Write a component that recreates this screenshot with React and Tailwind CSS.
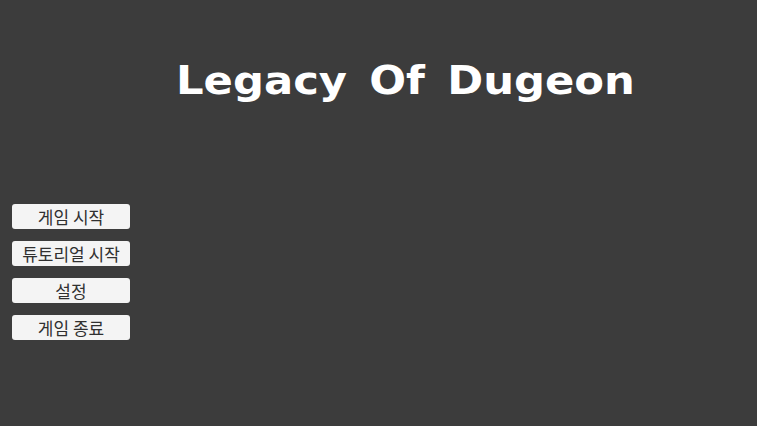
import React from 'react';

const menu = ['게임 시작', '튜토리얼 시작', '설정', '게임 종료'];

export default function App() {
  return (
    <div className="w-[757px] h-[426px] bg-[#3c3c3c] overflow-hidden flex flex-col">
      {/* Title (slightly stretched like the original canvas) */}
      <h1
        className="mt-[58px] ml-[176px] text-[39px] leading-[45px] font-bold [word-spacing:6.5px] text-white whitespace-nowrap origin-left scale-x-[1.11]"
        style={{ fontFamily: '"DejaVu Sans", sans-serif' }}
      >
        Legacy Of Dugeon
      </h1>

      {/* Menu */}
      <div className="mt-[101px] ml-[12px] flex flex-col gap-[12px] w-[118px]">
        {menu.map(label => (
          <button
            key={label}
            className="h-[25px] rounded-[3px] bg-[#f4f4f4] text-[#303030] text-[17px] leading-none flex items-center justify-center"
            style={{ fontFamily: '"Noto Sans CJK KR", "Noto Sans", sans-serif' }}
          >
            {label}
          </button>
        ))}
      </div>
    </div>
  );
}
